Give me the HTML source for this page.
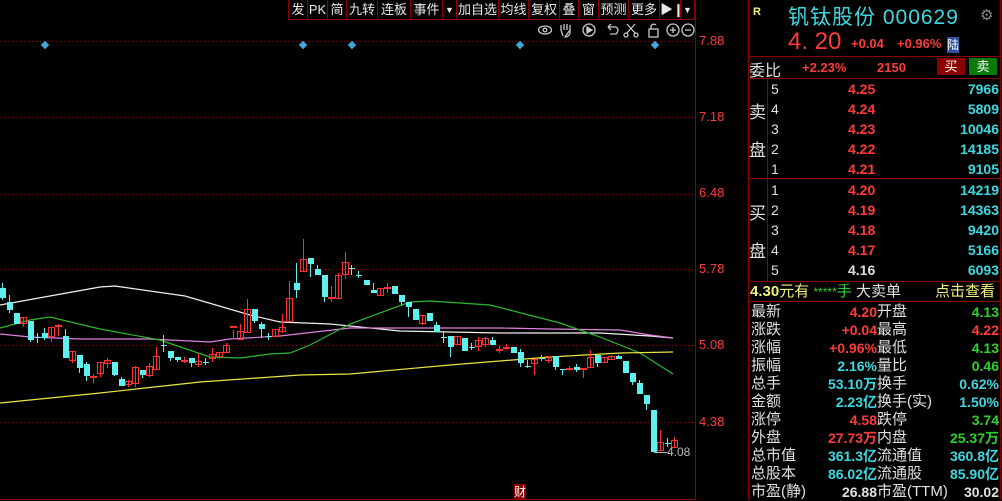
<!DOCTYPE html>
<html><head><meta charset="utf-8"><style>
*{margin:0;padding:0;box-sizing:border-box}
body{width:1002px;height:500px;background:#000;overflow:hidden;position:relative;font-family:"Liberation Sans","Noto Sans CJK SC",sans-serif;}
.a{position:absolute;white-space:nowrap}
.r{color:#ff3b3b}.c{color:#3fd8e0}.g{color:#2ed12e}.w{color:#e0e0e0}.y{color:#f3f37a}
.tb{position:absolute;top:0;height:20px;font-size:13px;color:#e8e8e8;border-right:1px solid #8b0000;line-height:20px;text-align:center}
.row{position:absolute;left:750px;width:250px;height:18px;font-size:15px;line-height:18px}
.row span{position:absolute}
.ob{position:absolute;height:20px;font-size:14px;font-weight:bold;line-height:20px}
</style></head><body>
<svg id="ch" width="1002" height="500" style="position:absolute;left:0;top:0"></svg>

<div class="a" style="left:288px;top:0;width:407px;height:20px;border-bottom:1px solid #8b0000;border-left:1px solid #8b0000"></div>
<div class="tb" style="left:289px;width:19px">发</div>
<div class="tb" style="left:308px;width:20px">PK</div>
<div class="tb" style="left:328px;width:19px">简</div>
<div class="tb" style="left:347px;width:31px">九转</div>
<div class="tb" style="left:378px;width:33px">连板</div>
<div class="tb" style="left:411px;width:32px">事件</div>
<div class="tb" style="left:443px;width:14px;font-size:9px">▼</div>
<div class="tb" style="left:457px;width:42px">加自选</div>
<div class="tb" style="left:499px;width:30px">均线</div>
<div class="tb" style="left:529px;width:31px">复权</div>
<div class="tb" style="left:560px;width:19px">叠</div>
<div class="tb" style="left:579px;width:20px">窗</div>
<div class="tb" style="left:599px;width:30px">预测</div>
<div class="tb" style="left:629px;width:31px">更多</div>
<div class="tb" style="left:660px;width:21px">▶❙</div>
<div class="tb" style="left:681px;width:14px;font-size:9px">▼</div>
<svg class="a" style="left:536px;top:21px" width="160" height="18" fill="none" stroke="#c8c8c8" stroke-width="1.3">
<ellipse cx="9" cy="9" rx="6.5" ry="4"/><circle cx="9" cy="9" r="1.8"/>
<path d="M27 15 L25 9 L25 4 M28 9 L28 3 M31 9 L31 3 M34 9 L34 4 M34 9 L34 12 Q33 16 29 16 Z"/>
<circle cx="53" cy="9" r="6"/><path d="M51 6 L56 9 L51 12 Z" fill="#c8c8c8"/>
<path d="M72 6 L80 6 Q84 9 80 13 L74 13 M72 6 L75 3 M72 6 L75 9"/>
<path d="M91 3 L99 12 M99 3 L91 12"/><circle cx="90" cy="14" r="2"/><circle cx="100" cy="14" r="2"/>
<rect x="113" y="8" width="9" height="8"/><path d="M115 8 L115 5 Q117 2 120 4"/>
<circle cx="137" cy="9" r="6"/><path d="M134 9 L140 9 M137 6 L137 12"/>
<circle cx="152" cy="9" r="6"/><path d="M149 9 L155 9"/>
</svg>

<div class="a r" style="left:699px;top:33px;font-size:13px">7.88</div>
<div class="a r" style="left:699px;top:109px;font-size:13px">7.18</div>
<div class="a r" style="left:699px;top:185px;font-size:13px">6.48</div>
<div class="a r" style="left:699px;top:261px;font-size:13px">5.78</div>
<div class="a r" style="left:699px;top:337px;font-size:13px">5.08</div>
<div class="a r" style="left:699px;top:414px;font-size:13px">4.38</div>
<div class="a" style="left:667px;top:445px;font-size:12px;color:#bbb">4.08</div>
<div class="a" style="left:514px;top:484px;font-size:12px;color:#fff;background:#8b0000;height:16px;line-height:16px">财</div>

<div class="a y" style="left:753px;top:6px;font-size:11px;font-weight:bold">R</div>
<div class="a c" style="left:788px;top:1px;font-size:21px;letter-spacing:1px">钒钛股份 000629</div>
<div class="a" style="left:980px;top:6px;font-size:15px;color:#888">⚙</div>
<div class="a r" style="left:788px;top:28px;font-size:24px">4. 20</div>
<div class="a r" style="left:851px;top:36px;font-size:13px;font-weight:bold">+0.04</div>
<div class="a r" style="left:897px;top:36px;font-size:13px;font-weight:bold">+0.96%</div>
<div class="a" style="left:947px;top:37px;font-size:12px;color:#fff;background:#3050a0;height:16px;line-height:16px">陆</div>
<div class="a w" style="left:749px;top:57px;font-size:16px">委比</div>
<div class="a r" style="left:802px;top:60px;font-size:13px;font-weight:bold">+2.23%</div>
<div class="a r" style="left:877px;top:60px;font-size:13px;font-weight:bold">2150</div>
<div class="a" style="left:937px;top:58px;width:28px;height:17px;background:#8b0000;color:#fff;font-size:13px;text-align:center;line-height:17px">买</div>
<div class="a" style="left:969px;top:58px;width:28px;height:17px;background:#0a7a0a;color:#fff;font-size:13px;text-align:center;line-height:17px">卖</div>
<div class="a w" style="left:749px;top:98px;font-size:17px">卖</div>
<div class="a w" style="left:749px;top:136px;font-size:17px">盘</div>
<div class="a w" style="left:749px;top:199px;font-size:17px">买</div>
<div class="a w" style="left:749px;top:237px;font-size:17px">盘</div>
<div id="ob"></div>
<div class="a" style="left:750px;top:282px;font-size:15px;line-height:19px"><span class="y" style="font-weight:bold">4.30</span><span class="y">元有</span> <span class="g" style="font-size:12px">*****</span><span class="g">手</span> <span class="w">大卖单</span></div>
<div class="a y" style="left:935px;top:282px;font-size:15px;line-height:19px">点击查看</div>
<div id="st"></div>
<script>
var s='';
function L(x1,y1,x2,y2,c,d,w){s+='<line x1="'+x1+'" y1="'+y1+'" x2="'+x2+'" y2="'+y2+'" stroke="'+c+'" stroke-width="'+(w||1)+'"'+(d?' stroke-dasharray="'+d+'"':'')+'/>';}
[41,117,194,269,345,422].forEach(function(y){L(0,y+.5,695,y+.5,'#8b0000','1,3');});
L(695.5,0,695.5,500,'#8b0000');L(748.5,0,748.5,500,'#8b0000');L(1000.5,0,1000.5,500,'#8b0000');
L(749,56.5,1001,56.5,'#8b0000');L(749,78.5,1001,78.5,'#8b0000');L(749,178.5,1001,178.5,'#8b0000');
L(749,281.5,1001,281.5,'#8b0000');L(749,301.5,1001,301.5,'#8b0000');L(767.5,79,767.5,281,'#8b0000');
L(0,499.5,695,499.5,'#8b0000');
[45,303,352,520,655].forEach(function(x){s+='<rect x="'+(x-3)+'" y="42" width="6" height="6" fill="#3fa8d8" transform="rotate(45 '+x+' 45)"/>';});
function P(pts,c){s+='<polyline fill="none" stroke="'+c+'" stroke-width="1.2" points="'+pts+'"/>';}
P('0,305 50,296 100,287 115,286 185,296 250,315 280,322 330,324 400,331 500,333 600,333 650,336 673,338','#f0f0f0');
P('0,334 30,337 80,339 150,339 210,342 230,339 280,336 350,328 500,328 550,329 620,330 650,335 673,338','#e080e0');
P('0,328 30,320 50,317 100,329 160,340 210,357 240,358 270,354 290,353 310,345 350,324 410,302 430,301 490,305 560,323 600,337 640,353 673,374','#2eb82e');
P('0,403 100,393 200,382 300,375 350,374 450,365 550,357 620,353 673,352','#e8e840');
var C=[[2,288,298,283,300,'c'],[9,302,310,295,313,'c'],[16,313,324,313,324,'c'],[23,317,323,317,327,'r'],[30,321,340,321,342,'c'],[37,337,338,333,343,'c'],[44,333,338,328,340,'c'],[51,327,336,327,342,'r'],[58,325,326,324,336,'r'],[65,336,358,329,358,'c'],[72,351,360,351,363,'r'],[79,355,368,355,373,'c'],[86,364,376,362,381,'c'],[93,376,377,374,383,'r'],[100,362,373,362,377,'r'],[107,360,363,358,368,'r'],[114,362,375,362,376,'c'],[121,379,386,377,386,'c'],[128,381,384,380,387,'r'],[135,367,383,366,387,'r'],[142,370,375,370,378,'c'],[149,366,375,363,377,'r'],[156,356,369,347,369,'r'],[163,345,346,335,352,'c'],[170,351,358,351,361,'c'],[177,357,360,357,362,'c'],[184,360,361,357,363,'r'],[191,358,363,358,367,'c'],[198,361,364,354,367,'r'],[205,362,363,358,365,'c'],[212,354,358,348,362,'r'],[219,352,356,352,359,'r'],[226,345,352,343,353,'r'],[233,326,327,330,339,'r'],[240,331,339,324,339,'r'],[247,309,332,299,333,'r'],[254,309,321,309,323,'c'],[261,324,329,322,338,'c'],[268,336,337,333,340,'c'],[275,329,336,329,336,'r'],[282,327,331,314,333,'r'],[289,298,321,281,321,'r'],[296,283,290,263,298,'c'],[303,259,271,239,271,'r'],[310,258,264,258,277,'c'],[317,269,275,265,275,'c'],[324,275,297,275,302,'c'],[331,297,298,286,302,'r'],[338,275,298,273,299,'r'],[345,262,274,252,279,'r'],
[351,268,269,265,275,'c'],[358,275,276,271,278,'c'],[366,280,285,280,285,'c'],[373,290,293,283,293,'c'],[380,288,295,288,295,'r'],[387,287,288,283,293,'r'],[394,286,294,286,294,'c'],[401,295,302,295,305,'c'],[408,302,307,302,317,'c'],[415,309,320,309,320,'c'],[422,315,323,315,325,'r'],[429,313,321,313,321,'c'],[436,325,332,322,332,'c'],[443,337,338,332,343,'c'],[450,336,347,336,357,'c'],[457,336,344,336,344,'r'],[464,338,351,338,351,'c'],[471,347,348,343,350,'c'],[478,340,346,337,351,'r'],[485,338,344,337,347,'r'],[492,340,345,337,345,'c'],[499,349,350,346,353,'r'],[506,347,348,344,350,'r'],[513,347,353,347,353,'c'],[520,352,363,349,367,'c'],[527,366,367,360,368,'c'],[534,359,363,359,375,'r'],[541,358,359,355,361,'c'],[548,356,360,356,363,'r'],[555,356,367,356,370,'c'],[562,369,370,369,375,'c'],[569,368,369,366,371,'r'],[576,367,370,364,372,'c'],[583,368,369,368,378,'r'],[590,357,367,350,368,'r'],[597,355,363,355,367,'c'],[604,357,362,357,362,'r'],[611,356,359,355,359,'r'],[618,356,359,355,359,'c'],[625,361,373,361,373,'c'],[632,373,382,373,385,'c'],[639,383,394,380,394,'c'],[646,395,404,395,410,'c'],[653,410,452,410,452,'c'],[660,442,450,430,450,'r'],[667,443,444,438,447,'c'],[674,440,447,437,447,'r']];
C.forEach(function(k){var col=k[5]=='r'?'#ff3030':'#5ff0f0';L(k[0]+.5,k[3],k[0]+.5,k[4],col);
 var h=Math.max(1,k[2]-k[1]);
 if(k[5]=='r')s+='<rect x="'+(k[0]-2.5)+'" y="'+(k[1]+.5)+'" width="6" height="'+h+'" fill="none" stroke="'+col+'"/>';
 else s+='<rect x="'+(k[0]-2)+'" y="'+k[1]+'" width="6" height="'+h+'" fill="'+col+'"/>';});
L(654,452.5,667,452.5,'#bbb');
document.getElementById('ch').innerHTML=s;
var ob='',rows=[['5','4.25','7966'],['4','4.24','5809'],['3','4.23','10046'],['2','4.22','14185'],['1','4.21','9105'],['1','4.20','14219'],['2','4.19','14363'],['3','4.18','9420'],['4','4.17','5166'],['5','4.16','6093']];
rows.forEach(function(r,i){var t=i<5?79+i*20:180+(i-5)*20;
 ob+='<div class="ob w" style="left:771px;top:'+t+'px;font-weight:normal">'+r[0]+'</div><div class="ob '+(i==9?'w':'r')+'" style="left:848px;top:'+t+'px">'+r[1]+'</div><div class="ob c" style="right:3px;top:'+t+'px">'+r[2]+'</div>';});
document.getElementById('ob').innerHTML=ob;
var st=[['最新','4.20','r','开盘','4.13','g'],['涨跌','+0.04','r','最高','4.22','r'],['涨幅','+0.96%','r','最低','4.13','g'],['振幅','2.16%','c','量比','0.46','g'],['总手','53.10万','c','换手','0.62%','c'],['金额','2.23亿','c','换手(实)','1.50%','c'],['涨停','4.58','r','跌停','3.74','g'],['外盘','27.73万','r','内盘','25.37万','g'],['总市值','361.3亿','c','流通值','360.8亿','c'],['总股本','86.02亿','c','流通股','85.90亿','c'],['市盈(静)','26.88','w','市盈(TTM)','30.02','w']];
var h='';st.forEach(function(r,i){var t=303+i*18;
 h+='<div class="row" style="top:'+t+'px"><span class="w" style="left:1px;font-size:15px">'+r[0]+'</span><span class="'+r[2]+'" style="right:123px;font-weight:bold;font-size:14px">'+r[1]+'</span><span class="w" style="left:127px;font-size:15px">'+r[3]+'</span><span class="'+r[5]+'" style="right:1px;font-weight:bold;font-size:14px">'+r[4]+'</span></div>';});
document.getElementById('st').innerHTML=h;
</script>
</body></html>
